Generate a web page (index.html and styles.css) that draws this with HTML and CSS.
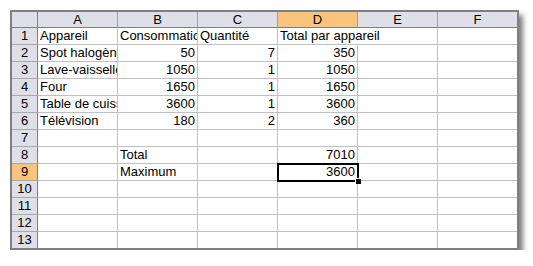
FILE: index.html
```html
<!DOCTYPE html>
<html>
<head>
<meta charset="utf-8">
<link rel="stylesheet" href="styles.css">
</head>
<body>
<div class="sheet">
  <div class="h corner"></div>
  <div class="h col">A</div><div class="h col">B</div><div class="h col">C</div><div class="h col sel">D</div><div class="h col">E</div><div class="h col last">F</div>

  <div class="h row">1</div>
  <div class="c">Appareil</div><div class="c">Consommation</div><div class="c">Quantité</div><div class="c spill">Total par appareil</div><div class="c"></div><div class="c last"></div>

  <div class="h row">2</div>
  <div class="c">Spot halogène</div><div class="c n">50</div><div class="c n">7</div><div class="c n">350</div><div class="c"></div><div class="c last"></div>

  <div class="h row">3</div>
  <div class="c">Lave-vaisselle</div><div class="c n">1050</div><div class="c n">1</div><div class="c n">1050</div><div class="c"></div><div class="c last"></div>

  <div class="h row">4</div>
  <div class="c">Four</div><div class="c n">1650</div><div class="c n">1</div><div class="c n">1650</div><div class="c"></div><div class="c last"></div>

  <div class="h row">5</div>
  <div class="c">Table de cuisson</div><div class="c n">3600</div><div class="c n">1</div><div class="c n">3600</div><div class="c"></div><div class="c last"></div>

  <div class="h row">6</div>
  <div class="c">Télévision</div><div class="c n">180</div><div class="c n">2</div><div class="c n">360</div><div class="c"></div><div class="c last"></div>

  <div class="h row">7</div>
  <div class="c"></div><div class="c"></div><div class="c"></div><div class="c"></div><div class="c"></div><div class="c last"></div>

  <div class="h row">8</div>
  <div class="c"></div><div class="c">Total</div><div class="c"></div><div class="c n">7010</div><div class="c"></div><div class="c last"></div>

  <div class="h row sel">9</div>
  <div class="c"></div><div class="c">Maximum</div><div class="c"></div><div class="c n active">3600<span class="frame"></span><span class="handle"></span></div><div class="c"></div><div class="c last"></div>

  <div class="h row">10</div>
  <div class="c"></div><div class="c"></div><div class="c"></div><div class="c"></div><div class="c"></div><div class="c last"></div>

  <div class="h row">11</div>
  <div class="c"></div><div class="c"></div><div class="c"></div><div class="c"></div><div class="c"></div><div class="c last"></div>

  <div class="h row">12</div>
  <div class="c"></div><div class="c"></div><div class="c"></div><div class="c"></div><div class="c"></div><div class="c last"></div>

  <div class="h row bottom">13</div>
  <div class="c bottom"></div><div class="c bottom"></div><div class="c bottom"></div><div class="c bottom"></div><div class="c bottom"></div><div class="c last bottom"></div>
</div>
</body>
</html>
```

FILE: styles.css
```css
html, body {
  margin: 0;
  padding: 0;
  background: #ffffff;
}

body {
  padding: 10px 0 0 10px;
  font-family: "Liberation Sans", Arial, sans-serif;
  font-size: 13px;
  color: #000000;
}

.sheet {
  display: grid;
  grid-template-columns: 26px 80px 80px 80px 80px 80px 79px;
  grid-template-rows: 16px repeat(12, 17px) 16px;
  width: max-content;
  border: 2px solid #7f7f7f;
  box-shadow: 4px 5px 5px rgba(0, 0, 0, 0.5);
  background: #ffffff;
}

.h {
  box-sizing: border-box;
  background: #dedfe7;
  text-align: center;
  white-space: nowrap;
}

.h.col {
  line-height: 15px;
  border-right: 1px solid #9e9e9e;
  border-bottom: 1px solid #7f7f7f;
}

.h.col.last {
  border-right: none;
}

.h.corner {
  border-right: 1px solid #7f7f7f;
  border-bottom: 1px solid #7f7f7f;
}

.h.row {
  line-height: 16px;
  border-right: 1px solid #7f7f7f;
  border-bottom: 1px solid #a9a9a9;
}

.h.row.bottom {
  border-bottom: none;
}

.h.sel {
  background: #fbc47d;
}

.c {
  box-sizing: border-box;
  position: relative;
  line-height: 16px;
  padding: 0 2px;
  border-right: 1px solid #c0c0c0;
  border-bottom: 1px solid #c0c0c0;
  white-space: nowrap;
  overflow: hidden;
}

.c.last {
  border-right: none;
}

.c.bottom {
  border-bottom: none;
}

.c.n {
  text-align: right;
}

.c.spill {
  overflow: visible;
  border-right-color: transparent;
  z-index: 1;
}

.c.active {
  overflow: visible;
  z-index: 2;
}

.frame {
  position: absolute;
  left: -1px;
  top: -1px;
  right: -2px;
  bottom: -2px;
  border: 2px solid #000000;
}

.handle {
  position: absolute;
  right: -4px;
  bottom: -4px;
  width: 5px;
  height: 5px;
  background: #000000;
  border: 1px solid #ffffff;
  box-sizing: content-box;
  border-right: none;
  border-bottom: none;
}
```
